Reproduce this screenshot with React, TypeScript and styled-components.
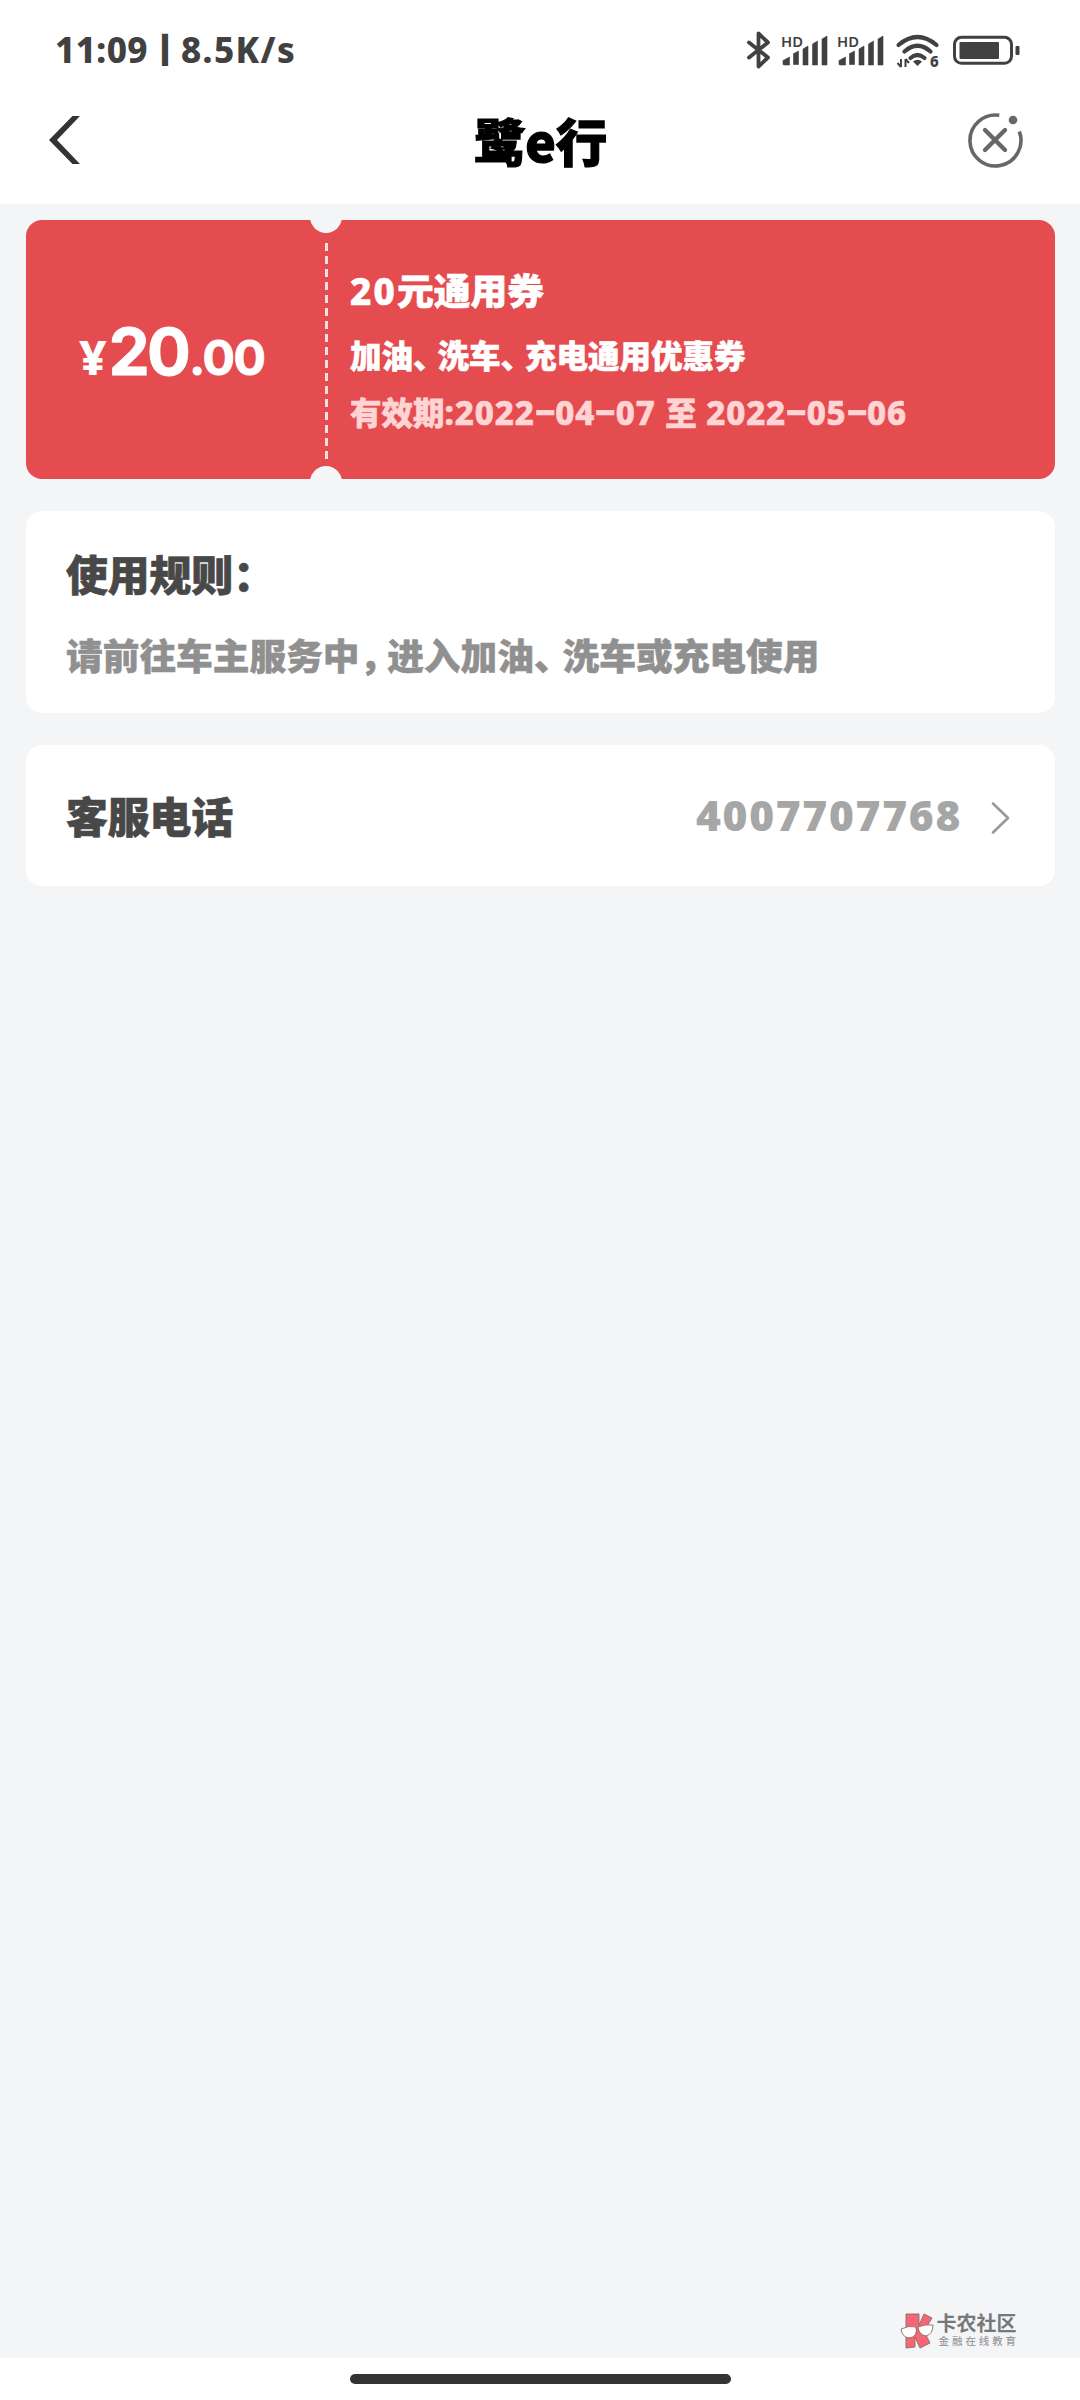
import React from "react";
import styled, { createGlobalStyle } from "styled-components";

const GlobalStyle = createGlobalStyle`
  * { box-sizing: border-box; }
  body { margin: 0; background: #f4f5f7; }
`;

const cjk = `"Noto Sans CJK SC", sans-serif`;

const Screen = styled.div`
  width: 1080px;
  height: 2400px;
  display: flex;
  flex-direction: column;
  background: #f4f5f7;
  font-family: "Noto Sans", ${cjk};
  font-weight: 900;
  white-space: nowrap;
`;

const StatusBar = styled.div`
  height: 98px;
  padding: 2px 60px 0 55px;
  display: flex;
  align-items: center;
  justify-content: space-between;
  background: #fff;
  color: #414141;
`;

const StatusText = styled.div`
  display: flex;
  align-items: center;
  font-size: 35px;
  font-weight: 800;
  line-height: 50px;
`;

const Divider = styled.span`
  margin: 0 8px 0 9px;
  font-size: 30px;
  transform: translateY(-3px);
  -webkit-text-stroke: 2.5px currentColor;
`;

const Clock = styled.span`
  letter-spacing: 0.4px;
`;

const Speed = styled.span`
  letter-spacing: 1.4px;
`;

const Header = styled.header`
  height: 106px;
  padding: 0 57px 22px 48px;
  display: grid;
  grid-template-columns: 70px 1fr 60px;
  align-items: center;
  background: #fff;
`;

const PageTitle = styled.h1`
  margin: 0;
  text-align: center;
  font: 900 51.5px/60px ${cjk};
  color: #000;
  -webkit-text-stroke: 1.2px #000;
`;

const CloseSlot = styled.div`
  display: flex;
  justify-content: flex-end;
`;

const Content = styled.main`
  flex: 1;
  padding: 16px 25px 0 26px;
  display: flex;
  flex-direction: column;
  gap: 32px;
`;

const Coupon = styled.section`
  position: relative;
  height: 259px;
  display: flex;
  border-radius: 16px;
  overflow: hidden;
  background: #e54c4f;
  color: #fff;
`;

const Amount = styled.div`
  width: 299px;
  padding: 10px 0 0 53px;
  display: flex;
  align-items: center;
`;

const AmountText = styled.div`
  font: 750 48px/70px Inter, sans-serif;
  letter-spacing: -1.4px;
  -webkit-text-stroke: 0.9px currentColor;
`;

const Yen = styled.span`
  font: 800 48px/70px "Noto Sans", sans-serif;
  letter-spacing: 2px;
  -webkit-text-stroke: 0;
`;

const Whole = styled.span`
  font-size: 65px;
  letter-spacing: -2.6px;
  margin-right: 1px;
`;

const Perforation = styled.div`
  width: 3px;
  height: 217px;
  margin-top: 23px;
  background: repeating-linear-gradient(#fbdfe0 0 8px, transparent 8px 13px);
`;

const Notch = styled.i<{ $edge: "top" | "bottom" }>`
  position: absolute;
  left: 283.5px;
  ${(p) => p.$edge}: -19px;
  width: 32px;
  height: 32px;
  border-radius: 50%;
  background: #f4f5f7;
`;

const Details = styled.div`
  padding: 43px 0 0 22px;
`;

const CouponName = styled.div`
  font-size: 36.8px;
  line-height: 56px;
  -webkit-text-stroke: 0.6px currentColor;
`;

const CouponLine = styled.div<{ $faded?: boolean; $gap?: number }>`
  margin-top: ${(p) => p.$gap ?? 0}px;
  font-size: 31.5px;
  line-height: 48px;
  color: ${(p) => (p.$faded ? "#ffd4d4" : "#fff")};
  -webkit-text-stroke: 0.6px currentColor;
`;

const Run = styled.span<{ $size?: number; $track?: number }>`
  font-weight: 800;
  ${(p) => p.$size && `font-size: ${p.$size}px;`}
  letter-spacing: ${(p) => p.$track ?? 0}px;
`;

const Dash = styled.span`
  display: inline-block;
  margin: 0 5px;
  letter-spacing: 0;
  transform: translateY(-3px) scaleX(1.9);
`;

const Punct = styled.span<{ $after: number }>`
  font-feature-settings: "halt";
  margin-right: ${(p) => p.$after}px;
`;

const Card = styled.section`
  border-radius: 16px;
  background: #fff;
`;

const RulesCard = styled(Card)`
  height: 202px;
  padding: 32px 40px 0;
`;

const CardTitle = styled.h2`
  margin: 0;
  font: 900 41.8px/60px ${cjk};
  color: #484848;
  -webkit-text-stroke: 0.7px currentColor;
`;

const RulesText = styled.p`
  margin: 21px 0 0;
  font: 900 36.7px/60px ${cjk};
  color: #909090;
  -webkit-text-stroke: 0.5px currentColor;
`;

const PhoneCard = styled(Card)`
  height: 141px;
  padding: 0 45px 2px 40px;
  display: flex;
  align-items: center;
`;

const Phone = styled.span`
  margin: 0 29px 0 auto;
  font-size: 42.5px;
  font-weight: 900;
  letter-spacing: 1.7px;
  color: #a6a6a6;
`;

const Watermark = styled.div`
  margin: auto 36px 9px auto;
  display: flex;
  align-items: center;
  gap: 3px;
`;

const WatermarkText = styled.div`
  display: flex;
  flex-direction: column;
`;

const Brand = styled.span`
  font: 700 20px/20px ${cjk};
  color: #77787a;
`;

const Slogan = styled.span`
  font: 500 10.5px/16px ${cjk};
  letter-spacing: 2.9px;
  margin-left: 2px;
  color: #9a9b9d;
`;

const NavBar = styled.footer`
  height: 42px;
  padding-top: 16px;
  display: flex;
  justify-content: center;
  background: #fff;
`;

const HomeHandle = styled.div`
  width: 381px;
  height: 10px;
  border-radius: 5px;
  background: #333;
`;

const Chevron = styled.svg`
  margin-top: 6px;
`;

const SignalBars = ({ x }: { x: number }) => (
  <g>
    <text x={x - 2} y={25.6} fontSize={15} fontWeight={600} fontFamily="Noto Sans, sans-serif" textLength={22} lengthAdjust="spacingAndGlyphs">
      HD
    </text>
    <path
      d={`M${x} 43v-3.500l6.500-3.500v8h-5.500q-1 0-1-1zM${x + 10} 33l5.500-3v13.500h-5v-10.500zM${x + 20} 28l5-3v19h-5zM${x + 29.500} 23l5-3v24h-5zM${x + 39} 18l5-3v29h-5z`}
      stroke="currentColor"
      strokeWidth={0.6}
      strokeLinejoin="round"
    />
  </g>
);

const StatusIcons = () => (
  <svg width="275" height="56" viewBox="0.500 1 275 56" fill="currentColor">
    <path d="M4.500 20.500l19 15-9.500 9V11.500l9.500 9-19 15" transform="translate(0 1)" fill="none" stroke="currentColor" strokeWidth="3.800" strokeLinejoin="round" strokeLinecap="round" />
    <SignalBars x={38.5} />
    <SignalBars x={94.5} />
    <g fill="none" stroke="currentColor" strokeWidth="4.200" strokeLinecap="round">
      <path d="M154 24Q173 8 192 24" />
      <path d="M160 30.500Q173 19 186 30.500" />
      <path d="M166 37Q173 31 180 37" />
    </g>
    <path d="M168.500 40.500Q173 37 177.500 40.500L173 45z" />
    <path d="M156.500 38v8M156.500 46l-3.500-4M161 46v-8M161 38l3.500 4" fill="none" stroke="currentColor" strokeWidth="2" />
    <text x="185.500" y="46" fontSize="15" fontWeight="800" fontFamily="Noto Sans, sans-serif">6</text>
    <rect x="210" y="16.300" width="57" height="26" rx="7" fill="none" stroke="currentColor" strokeWidth="3" />
    <rect x="215" y="21" width="39.500" height="17" rx="1" />
    <rect x="271" y="25" width="4" height="9" rx="1" />
  </svg>
);

const BackIcon = () => (
  <svg width="34" height="50" viewBox="0 0 34 50">
    <path d="M24.500 1h7.500L9 25l23 24h-7.500L1 25z" fill="#333" />
  </svg>
);

const CloseIcon = () => (
  <svg width="56" height="56" viewBox="0 0 56 56" fill="none" stroke="#676767" strokeWidth="3.600">
    <path d="M32.300 3.300A25.500 25.500 0 1 0 52.300 19.500" />
    <path d="M18 18l20 20M38 18l-20 20" strokeWidth="4.400" strokeLinecap="round" />
    <circle cx="46" cy="8" r="4.300" fill="#676767" stroke="none" />
  </svg>
);

const ChevronIcon = () => (
  <Chevron width="19" height="34" viewBox="0 0 19 34">
    <path d="M2 2.500l15 14.500L2 31.500" fill="none" stroke="#999" strokeWidth="2.600" strokeLinecap="round" strokeLinejoin="round" />
  </Chevron>
);

const WatermarkLogo = () => (
  <svg width="34" height="36" viewBox="0 0 34 36" stroke="#88696c" strokeWidth="0.900">
    <path d="M6 1h13v11l5-11 8 4-8 13 6 12-10 5-5-11v10l-9 1z" fill="#f56774" />
    <path d="M1 16q8-4 15-2q2 10-7 11q-7-1-8-9zM18 14q7-3 15-2q0 9-7 11q-7-1-8-9z" fill="#fff" />
  </svg>
);

const DateText = ({ value }: { value: string }) => (
  <>
    {value.split("-").map((part, i) => (
      <React.Fragment key={i}>
        {i > 0 && <Dash>-</Dash>}
        {part}
      </React.Fragment>
    ))}
  </>
);

export default function App() {
  return (
    <Screen>
      <GlobalStyle />
      <StatusBar>
        <StatusText>
          <Clock>11:09</Clock>
          <Divider>|</Divider>
          <Speed>8.5K/s</Speed>
        </StatusText>
        <StatusIcons />
      </StatusBar>
      <Header>
        <BackIcon />
        <PageTitle>鹭e行</PageTitle>
        <CloseSlot>
          <CloseIcon />
        </CloseSlot>
      </Header>
      <Content>
        <Coupon>
          <Amount>
            <AmountText>
              <Yen>¥</Yen>
              <Whole>20</Whole>.00
            </AmountText>
          </Amount>
          <Perforation />
          <Notch $edge="top" />
          <Notch $edge="bottom" />
          <Details>
            <CouponName>
              <Run $track={2.2}>20</Run>元通用券
            </CouponName>
            <CouponLine $gap={13}>
              加油<Punct $after={8.7}>、</Punct>洗车<Punct $after={8.7}>、</Punct>充电通用优惠券
            </CouponLine>
            <CouponLine $faded $gap={9}>
              有效期
              <Run $size={33} $track={0.9}>
                :<DateText value="2022-04-07" />{" "}
              </Run>
              至
              <Run $size={33} $track={0.9}>
                {" "}
                <DateText value="2022-05-06" />
              </Run>
            </CouponLine>
          </Details>
        </Coupon>
        <RulesCard>
          <CardTitle>使用规则：</CardTitle>
          <RulesText>
            请前往车主服务中<Punct $after={9.3}>，</Punct>进入加油<Punct $after={10.3}>、</Punct>洗车或充电使用
          </RulesText>
        </RulesCard>
        <PhoneCard>
          <CardTitle>客服电话</CardTitle>
          <Phone>4007707768</Phone>
          <ChevronIcon />
        </PhoneCard>
        <Watermark>
          <WatermarkLogo />
          <WatermarkText>
            <Brand>卡农社区</Brand>
            <Slogan>金融在线教育</Slogan>
          </WatermarkText>
        </Watermark>
      </Content>
      <NavBar>
        <HomeHandle />
      </NavBar>
    </Screen>
  );
}
